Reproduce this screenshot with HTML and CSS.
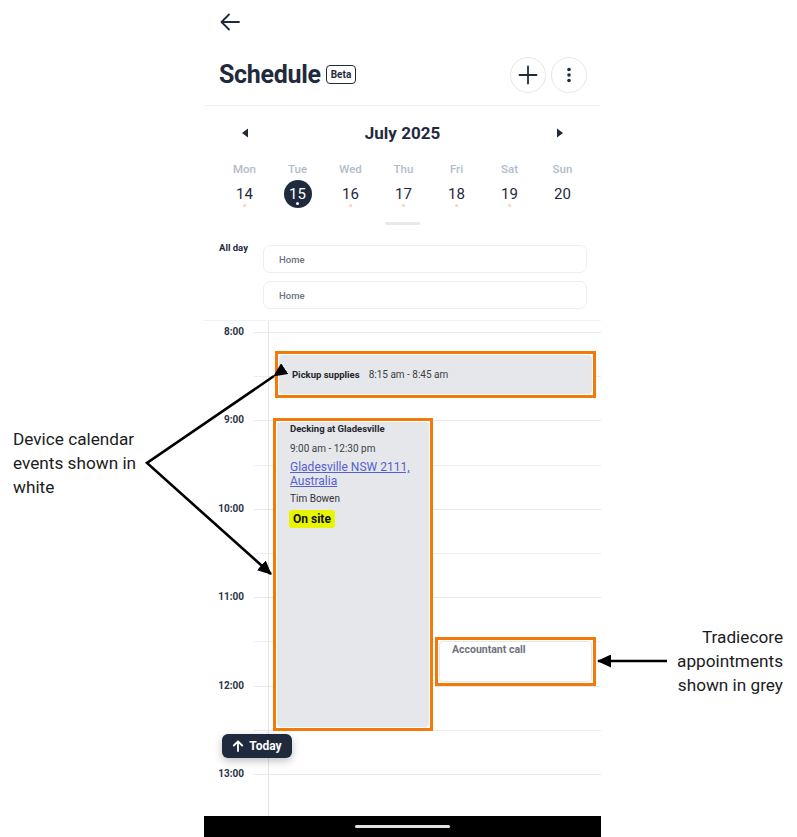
FILE: index.html
```html
<!DOCTYPE html>
<html lang="en">
<head>
	<meta charset="UTF-8">
	<title>Schedule</title>
	<link rel="stylesheet" href="styles.css">
</head>
<body>
	<div class="page">
		<div class="side"></div>

		<div class="phone">
			<div class="topbar">
				<svg width="22" height="22" viewBox="0 0 22 22"><path d="M20 11H3M10 3.5L2.5 11l7.5 7.5" fill="none" stroke="#1f2a3d" stroke-width="1.8" stroke-linecap="round" stroke-linejoin="round"/></svg>
			</div>

			<div class="titlebar">
				<div class="title">Schedule</div>
				<span class="beta">Beta</span>
				<div class="actions">
					<div class="round-btn">
						<svg width="20" height="20" viewBox="0 0 20 20"><path d="M10 1.5v17M1.5 10h17" stroke="#1f2a3d" stroke-width="1.8" stroke-linecap="round"/></svg>
					</div>
					<div class="round-btn">
						<svg width="20" height="20" viewBox="0 0 20 20"><circle cx="10" cy="4.5" r="1.8" fill="#1f2a3d"/><circle cx="10" cy="10" r="1.8" fill="#1f2a3d"/><circle cx="10" cy="15.5" r="1.8" fill="#1f2a3d"/></svg>
					</div>
				</div>
			</div>

			<div class="monthbar">
				<span class="nav-arrow"><svg width="8" height="10" viewBox="0 0 8 10"><path d="M7 0.5v9L1 5z" fill="#1f2a3d"/></svg></span>
				<span class="month">July 2025</span>
				<span class="nav-arrow"><svg width="8" height="10" viewBox="0 0 8 10"><path d="M1 0.5v9L7 5z" fill="#1f2a3d"/></svg></span>
			</div>

			<div class="week">
				<div class="wd">Mon</div>
				<div class="wd">Tue</div>
				<div class="wd">Wed</div>
				<div class="wd">Thu</div>
				<div class="wd">Fri</div>
				<div class="wd">Sat</div>
				<div class="wd">Sun</div>
				<div class="day dot">14</div>
				<div class="day selected">15</div>
				<div class="day dot">16</div>
				<div class="day dot">17</div>
				<div class="day dot">18</div>
				<div class="day dot">19</div>
				<div class="day">20</div>
			</div>
			<div class="handle"></div>

			<div class="allday">
				<div class="allday-label">All day</div>
				<div class="allday-list">
					<div class="allday-item">Home</div>
					<div class="allday-item">Home</div>
				</div>
			</div>

			<div class="timeline">
				<div class="hour"><div class="hour-label">8:00</div><div class="hour-body"><div class="half"></div></div></div>
				<div class="hour"><div class="hour-label">9:00</div><div class="hour-body"><div class="half"></div></div></div>
				<div class="hour"><div class="hour-label">10:00</div><div class="hour-body"><div class="half"></div></div></div>
				<div class="hour"><div class="hour-label">11:00</div><div class="hour-body"><div class="half"></div></div></div>
				<div class="hour"><div class="hour-label">12:00</div><div class="hour-body"><div class="half"></div></div></div>
				<div class="hour"><div class="hour-label">13:00</div><div class="hour-body"><div class="half"></div></div></div>

				<div class="hl ev-pickup">
					<div class="event row">
						<span class="ev-title">Pickup supplies</span>
						<span class="ev-time">8:15 am - 8:45 am</span>
					</div>
				</div>

				<div class="hl ev-decking">
					<div class="event">
						<div class="ev-title">Decking at Gladesville</div>
						<div class="ev-time">9:00 am - 12:30 pm</div>
						<a class="ev-link">Gladesville NSW 2111, Australia</a>
						<div class="ev-person">Tim Bowen</div>
						<span class="badge">On site</span>
					</div>
				</div>

				<div class="hl ev-accountant">
					<div class="event plain">
						<div class="ev-title muted">Accountant call</div>
					</div>
				</div>

				<div class="today-btn">
					<svg width="12" height="12" viewBox="0 0 12 12"><path d="M6 11V1.5M1.8 5.5L6 1.3l4.2 4.2" fill="none" stroke="#fff" stroke-width="1.8" stroke-linecap="round" stroke-linejoin="round"/></svg>
					Today
				</div>
			</div>

			<div class="navbar"><div class="pill"></div></div>
		</div>

		<div class="side"></div>

		<div class="note note-left">Device calendar<br>events shown in<br>white</div>
		<div class="note note-right">Tradiecore<br>appointments<br>shown in grey</div>

		<svg class="arrows" width="797" height="837" viewBox="0 0 797 837">
			<defs>
				<marker id="head" markerUnits="userSpaceOnUse" markerWidth="14" markerHeight="13" refX="13" refY="6.5" orient="auto">
					<path d="M0 0L14 6.5L0 13z" fill="#000"/>
				</marker>
			</defs>
			<polyline points="274,376 147,463 271,574" fill="none" stroke="#000" stroke-width="2.6" stroke-linejoin="miter" marker-start="url(#head)" marker-end="url(#head)"/>
			<line x1="667" y1="661" x2="598" y2="661" stroke="#000" stroke-width="2.6" marker-end="url(#head)"/>
		</svg>
	</div>
</body>
</html>
```

FILE: styles.css
```css
body{
	margin: 0;
	background: #fff;
	font-family: Roboto, "Noto Sans", sans-serif;
	color: #1f2a3d;
}
.page{
	position: relative;
	width: 797px;
	height: 837px;
	display: flex;
	overflow: hidden;
}
.side{
	width: 204px;
	flex: none;
}
.side:last-of-type{
	flex: 1;
}
.phone{
	width: 397px;
	height: 837px;
	flex: none;
	display: flex;
	flex-direction: column;
}

/* header */
.topbar{
	height: 44px;
	padding-left: 15px;
	display: flex;
	align-items: center;
}
.titlebar{
	height: 61px;
	padding: 0 14px 0 15px;
	display: flex;
	align-items: center;
	border-bottom: 1px solid #eff1f3;
}
.title{
	font-size: 25px;
	font-weight: 700;
	letter-spacing: -0.3px;
}
.beta{
	margin-left: 5px;
	border: 1.5px solid #1f2a3d;
	border-radius: 4px;
	font-size: 10px;
	font-weight: 700;
	padding: 2px 4px;
	line-height: 13px;
}
.actions{
	margin-left: auto;
	display: flex;
	gap: 5px;
}
.round-btn{
	width: 36px;
	height: 36px;
	border: 1px solid #e4e7eb;
	border-radius: 50%;
	display: flex;
	align-items: center;
	justify-content: center;
	box-sizing: border-box;
}

/* month + week */
.monthbar{
	height: 53px;
	margin: 0 14px 0 14px;
	display: flex;
	align-items: center;
	justify-content: space-between;
}
.nav-arrow{
	width: 53px;
	display: flex;
	justify-content: center;
}
.month{
	font-size: 17px;
	font-weight: 700;
}
.week{
	margin-left: 14px;
	display: grid;
	grid-template-columns: repeat(7, 53px);
}
.wd{
	height: 20px;
	line-height: 20px;
	text-align: center;
	font-size: 11.5px;
	font-weight: 500;
	color: #b3bcca;
}
.day{
	position: relative;
	height: 28px;
	width: 28px;
	margin: 1px auto 0;
	line-height: 28px;
	text-align: center;
	font-size: 15px;
	border-radius: 50%;
}
.day.selected{
	background: #1f2a3d;
	color: #fff;
}
.day.dot::after,
.day.selected::after{
	content: "";
	position: absolute;
	left: 12.5px;
	top: 24px;
	width: 3px;
	height: 3px;
	border-radius: 50%;
	background: #fbd2b4;
}
.day.selected::after{
	top: 22px;
	background: #fff;
}
.handle{
	width: 35px;
	height: 3px;
	border-radius: 2px;
	background: #e6e8ec;
	margin: 14px auto 0;
}

/* all day */
.allday{
	display: flex;
	padding: 20px 14px 11px 15px;
	border-bottom: 1px solid #f0f1f3;
}
.allday-label{
	width: 44px;
	font-size: 9.5px;
	font-weight: 700;
	line-height: 14px;
	margin-top: -4px;
}
.allday-list{
	flex: 1;
	display: flex;
	flex-direction: column;
	gap: 8px;
}
.allday-item{
	height: 28px;
	line-height: 28px;
	box-sizing: border-box;
	border: 1px solid #eceef1;
	border-radius: 7px;
	padding-left: 15px;
	font-size: 9.5px;
	font-weight: 500;
	color: #6b7280;
}

/* timeline */
.timeline{
	position: relative;
	flex: 1;
	padding-top: 11px;
	overflow: hidden;
}
.timeline::before{
	content: "";
	position: absolute;
	left: 64px;
	top: 0;
	bottom: 0;
	width: 1px;
	background: #e3e5e9;
}
.hour{
	display: flex;
	height: 88.4px;
}
.hour-label{
	width: 40px;
	text-align: right;
	font-size: 10px;
	font-weight: 700;
	color: #2a3447;
	line-height: 12px;
	margin-top: -6px;
}
.hour-body{
	flex: 1;
	margin-left: 10px;
	border-top: 1px solid #e6e8ec;
}
.half{
	height: 43.2px;
	border-bottom: 1px solid #eceef1;
}
.hl{
	position: absolute;
	border: 3px solid #f27a0a;
	padding: 1px;
	background: #fff;
	box-sizing: border-box;
}
.ev-pickup{
	top: 30px;
	left: 71px;
	width: 321px;
	height: 47px;
}
.ev-decking{
	top: 97px;
	left: 69px;
	width: 160px;
	height: 313px;
}
.ev-accountant{
	top: 316px;
	left: 231px;
	width: 161px;
	height: 49px;
}
.event{
	height: 100%;
	box-sizing: border-box;
	background: #e6e7ea;
	border-radius: 4px;
	padding: 0 8px 0 13px;
}
.event.row{
	display: flex;
	align-items: center;
}
.event.plain{
	background: #fff;
	border: 1px solid #e6e8ec;
	padding-top: 1px;
	padding-left: 12px;
}
.ev-title{
	font-size: 9.5px;
	font-weight: 700;
	color: #23262d;
	line-height: 14px;
}
.ev-title.muted{
	font-size: 10.5px;
	color: #6e7380;
}
.ev-time{
	font-size: 10px;
	color: #3b3f47;
	line-height: 14px;
}
.event.row .ev-time{
	margin-left: 9px;
}
.ev-decking .ev-time{
	margin-top: 6px;
}
.ev-link{
	display: block;
	margin-top: 4px;
	font-size: 12px;
	line-height: 14px;
	color: #5661d0;
	text-decoration: underline;
}
.ev-person{
	margin-top: 4px;
	font-size: 10px;
	color: #2f333a;
	line-height: 14px;
}
.badge{
	display: inline-block;
	margin-top: 4px;
	margin-left: -1px;
	background: #e7f600;
	border-radius: 3px;
	padding: 0 4px;
	height: 18px;
	line-height: 18px;
	font-size: 12px;
	font-weight: 700;
	color: #111;
}
.today-btn{
	position: absolute;
	left: 18px;
	top: 413px;
	width: 70px;
	height: 24px;
	box-sizing: border-box;
	background: #1f2a3d;
	color: #fff;
	border-radius: 6px;
	display: flex;
	align-items: center;
	justify-content: center;
	gap: 5px;
	font-size: 12px;
	font-weight: 700;
	box-shadow: 0 3px 8px rgba(0,0,0,0.25);
}
.navbar{
	height: 21px;
	flex: none;
	background: #000;
	display: flex;
	align-items: center;
	justify-content: center;
}
.pill{
	width: 95px;
	height: 3px;
	border-radius: 2px;
	background: #e2e2e2;
}

/* annotations */
.note{
	position: absolute;
	font-size: 17.2px;
	line-height: 24px;
	color: #1c1c1c;
}
.note-left{
	left: 13px;
	top: 427px;
}
.note-right{
	right: 14px;
	top: 625px;
	text-align: right;
}
.arrows{
	position: absolute;
	left: 0;
	top: 0;
	pointer-events: none;
}
```
